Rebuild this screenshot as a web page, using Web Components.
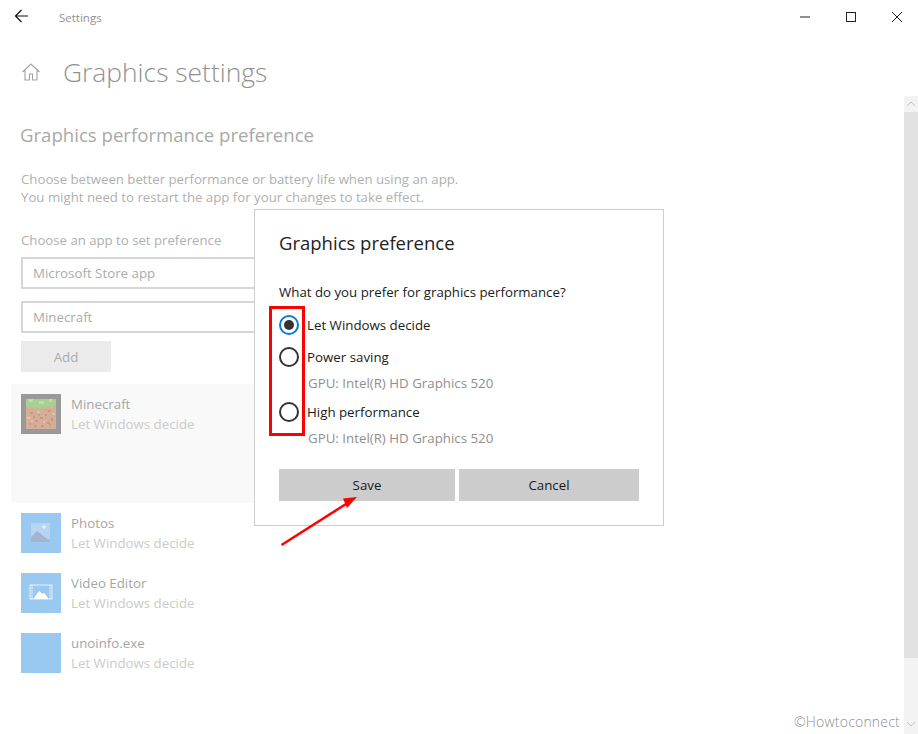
<!DOCTYPE html>
<html lang="en"><head><meta charset="utf-8"><title>Graphics settings</title>
<style>
html,body{margin:0;height:100%;background:#fff}
body{width:918px;height:734px;overflow:hidden;font-family:"Open Sans","Noto Sans","Liberation Sans",sans-serif}
</style></head><body>
<settings-window>
  <app-row slot="apps" name="Minecraft" selected><svg slot="icon" width="40" height="40" viewBox="0 0 40 40" shape-rendering="crispEdges"><rect width="40" height="40" fill="#999"/><rect x="5" y="5" width="30" height="30" fill="#d6ad96"/><path d="M5 5h30v6l-3 1v3l-3-1v-2l-4 1v3l-3-3-3 2-3-2-2 3-3-3-3 2-3-3z" fill="#a9d093"/><path d="M8 5h4v3H8zM18 7h5v3h-5zM28 5h3v3h-3z" fill="#bfdcae"/><path d="M9 18h3v2H9zM24 20h2v2h-2zM14 26h3v2h-3zM30 24h2v3h-2zM20 31h3v2h-3zM8 29h2v2H8zM27 16h3v2h-3zM12 22h2v2h-2zM19 23h3v2h-3zM26 28h3v2h-3zM13 31h3v2h-3z" fill="#c49a86"/><path d="M6 23h3v2H6zM16 17h3v2h-3zM22 27h2v2h-2zM31 19h3v2h-3zM10 26h2v2h-2z" fill="#e3c3b0"/><path d="M17 20h2v2h-2zM28 30h2v2h-2zM24 15h2v1h-2z" fill="#a9a9a9"/></svg></app-row>
  <app-row slot="apps" name="Photos"><svg slot="icon" width="40" height="40" viewBox="0 0 40 40"><rect width="40" height="40" fill="#99c9f0"/><rect x="10" y="10" width="19" height="19" fill="#b6d5f2"/><path d="M10 24l6-6 4 3 5 4 4 2v2H10z" fill="#a4b3d0"/><circle cx="23" cy="14" r="1.700" fill="#e8f2fb"/></svg></app-row>
  <app-row slot="apps" name="Video Editor"><svg slot="icon" width="40" height="40" viewBox="0 0 40 40"><rect width="40" height="40" fill="#99c9f0"/><rect x="9" y="12" width="22" height="14" fill="none" stroke="#e4f0fb" stroke-width="1"/><path d="M11 12v14M29 12v14" stroke="#e4f0fb" stroke-width="1.400" stroke-dasharray="1.500 1"/><path d="M12.500 26l4-6 2-2 3 3 2-1 4 6z" fill="#fff"/></svg></app-row>
  <app-row slot="apps" name="unoinfo.exe"><span slot="icon"></span></app-row>
  <pref-dialog slot="overlay"></pref-dialog>
  <call-outs slot="overlay"></call-outs>
</settings-window>
<script>
function tpl(html){const t=document.createElement('template');t.innerHTML=html;return t}
function def(name,html,init){const t=tpl(html);customElements.define(name,class extends HTMLElement{connectedCallback(){if(this.shadowRoot)return;const s=this.attachShadow({mode:'open'});s.appendChild(t.content.cloneNode(true));if(init)init(this,s)}})}

def('settings-window',`<style>
:host{display:flex;flex-direction:column;width:918px;height:734px;position:relative;color:#a0a0a0;overflow:hidden;background:#fff}
.bar{height:32px;flex:none;display:flex;align-items:center;justify-content:space-between;padding-top:1px;box-sizing:border-box}
.left{display:flex;align-items:center;gap:29px;padding-left:14px}
.left svg{display:block;margin-top:-2px}
.ttl{font-size:11.500px;color:#929292;margin-top:1px}
.ctl{display:flex;align-items:center;margin-right:-2px}
.ctl span{width:46px;height:16px;display:flex;justify-content:center;align-items:center}
.below{flex:1;min-height:0;display:flex}
.main{flex:1;min-width:0;display:flex;flex-direction:column}
.head{display:flex;align-items:center;gap:22px;padding:18px 0 0 21px;height:44px}
h1{margin:0;font-weight:300;font-size:26.400px;line-height:44px;color:#919191}
.content{padding:28px 0 0 21px;width:600px}
h2{margin:0 0 0 -1px;font-weight:400;font-size:18.600px;line-height:26px;color:#a9a9a9}
p{margin:22px 0 0;font-size:13.230px;line-height:18px;color:#b0b0b0}
.lbl{margin-top:25px;line-height:18px;font-size:13.200px;color:#b0b0b0}
.fld{box-sizing:border-box;height:32px;width:400px;border:2px solid #d6d6d6;padding-left:10px;display:flex;align-items:center;font-size:13.300px;color:#ababab}
.f1{margin-top:8px}.f2{margin-top:12px}
.add{width:90px;height:31px;background:#ebebeb;margin-top:8px;display:flex;align-items:center;justify-content:center;font-size:13.300px;color:#ababab}
.list{margin:12px 0 0 -10px;display:flex;flex-direction:column}
.sb{width:14px;margin-top:64px;background:#f3f3f3;display:flex;flex-direction:column;align-items:center;flex:none}
.sb .a{height:16px;display:flex;align-items:center;justify-content:center}
.sb .t{height:546px;width:14px;background:#e2e2e2}
.sb .sp{flex:1}
</style>
<div class="bar"><div class="left">
    <svg width="16" height="14" viewBox="0 0 16 14" fill="none" stroke="#111" stroke-width="1.200"><path d="M1.500 7H14M7.500 1L1.500 7l6 6"/></svg>
    <span class="ttl">Settings</span></div>
    <div class="ctl">
      <span><svg width="12" height="2" viewBox="0 0 12 2"><path d="M1 1h10" stroke="#222" stroke-width="1"/></svg></span>
      <span><svg width="12" height="12" viewBox="0 0 12 12" fill="none"><rect x="1.500" y="1.500" width="9" height="9" stroke="#222"/></svg></span>
      <span><svg width="12" height="12" viewBox="0 0 12 12" fill="none"><path d="M1 1l10 10M11 1L1 11" stroke="#222"/></svg></span>
    </div></div>
<div class="below"><div class="main">
  <div class="head"><svg width="20" height="20" viewBox="0 0 20 20" fill="none" stroke="#a3a3a3" stroke-width="1.100"><path d="M1.500 10L10 2l8.500 8M4 8v10h4.500v-6h3v6H16V8"/></svg><h1>Graphics settings</h1></div>
  <div class="content">
    <h2>Graphics performance preference</h2>
    <p>Choose between better performance or battery life when using an app.<br>You might need to restart the app for your changes to take effect.</p>
    <div class="lbl">Choose an app to set preference</div>
    <div class="fld f1">Microsoft Store app</div>
    <div class="fld f2">Minecraft</div>
    <div class="add">Add</div>
    <div class="list"><slot name="apps"></slot></div>
  </div>
</div>
<div class="sb">
  <div class="a"><svg width="10" height="6" viewBox="0 0 10 6" fill="none" stroke="#c4c4c4"><path d="M1 5l4-4 4 4"/></svg></div>
  <div class="t"></div><div class="sp"></div>
  <div class="a" style="height:20px"><svg width="10" height="6" viewBox="0 0 10 6" fill="none" stroke="#c4c4c4"><path d="M1 1l4 4 4-4"/></svg></div>
</div></div>
<slot name="overlay"></slot>`);

def('app-row',`<style>
:host{display:flex;box-sizing:border-box;width:400px;height:60px;padding:10px 10px;gap:10px}
:host([selected]){height:119px;background:#f9f9f9}
.ic{width:40px;height:40px;flex:none;background:#99c9f0;display:block}
::slotted(svg){display:block}
.t{display:flex;flex-direction:column}
.n{font-size:13.300px;line-height:20px;color:#a6a6a6}
.s{font-size:13.300px;line-height:20px;color:#cbcbcb}
</style><div class="ic"><slot name="icon"></slot></div><div class="t"><div class="n"></div><div class="s">Let Windows decide</div></div>`,
(h,s)=>{s.querySelector('.n').textContent=h.getAttribute('name')});

def('radio-opt',`<style>
:host{display:flex;flex-direction:column}
.r{display:flex;align-items:center;gap:8px;height:20px}
.c{box-sizing:border-box;width:20px;height:20px;border-radius:50%;border:2px solid #333;flex:none;display:flex;align-items:center;justify-content:center}
:host([checked]) .c{border-color:#0a7cd6}
.d{width:10px;height:10px;border-radius:50%;background:#333;display:none}
:host([checked]) .d{display:block}
.l{font-size:13.300px;color:#1a1a1a}
.g{font-size:13.300px;color:#8f8f8f;padding-left:29px;line-height:20px;margin-top:6px}
</style><div class="r"><span class="c"><span class="d"></span></span><span class="l"></span></div><div class="g"></div>`,
(h,s)=>{s.querySelector('.l').textContent=h.getAttribute('label');const g=h.getAttribute('gpu');const e=s.querySelector('.g');if(g)e.textContent=g;else e.remove()});

def('pref-dialog',`<style>
:host{position:absolute;left:254px;top:209px;box-sizing:border-box;width:410px;height:317px;background:#fff;border:1px solid #cdcdcd;padding:17px 24px 0;display:flex;flex-direction:column;color:#1a1a1a}
h3{margin:0;font-weight:400;font-size:18.500px;line-height:32px;color:#222}
.q{margin-top:23px;font-size:13.270px;line-height:20px}
.opts{margin-top:13px;display:flex;flex-direction:column}
.btns{display:flex;gap:4px;margin-top:21px}
.b{height:32px;background:#ccc;display:flex;align-items:center;justify-content:center;font-size:13.300px}
</style>
<h3>Graphics preference</h3>
<div class="q">What do you prefer for graphics performance?</div>
<div class="opts">
  <radio-opt checked label="Let Windows decide"></radio-opt>
  <radio-opt style="margin-top:12px" label="Power saving" gpu="GPU: Intel(R) HD Graphics 520"></radio-opt>
  <radio-opt style="margin-top:9px" label="High performance" gpu="GPU: Intel(R) HD Graphics 520"></radio-opt>
</div>
<div class="btns"><div class="b" style="width:176px">Save</div><div class="b" style="width:180px">Cancel</div></div>`);

def('call-outs',`<style>
:host{position:absolute;inset:0;pointer-events:none;display:block}
.box{position:absolute;left:269px;top:306px;width:30px;height:124px;border:3px solid #f00}
svg{position:absolute;left:270px;top:485px}
.wm{position:absolute;left:794px;top:712px;font-size:14px;font-weight:300;color:#8f8f8f;letter-spacing:.2px;line-height:20px}
</style><div class="box"></div>
<svg width="100" height="70" viewBox="0 0 100 70"><path d="M11.500 60L76 19" stroke="#f00" stroke-width="2.500" fill="none"/><path d="M87 12L73 13.500 77 23z" fill="#f00"/></svg>
<div class="wm">©Howtoconnect</div>`);
</script>
</body></html>
